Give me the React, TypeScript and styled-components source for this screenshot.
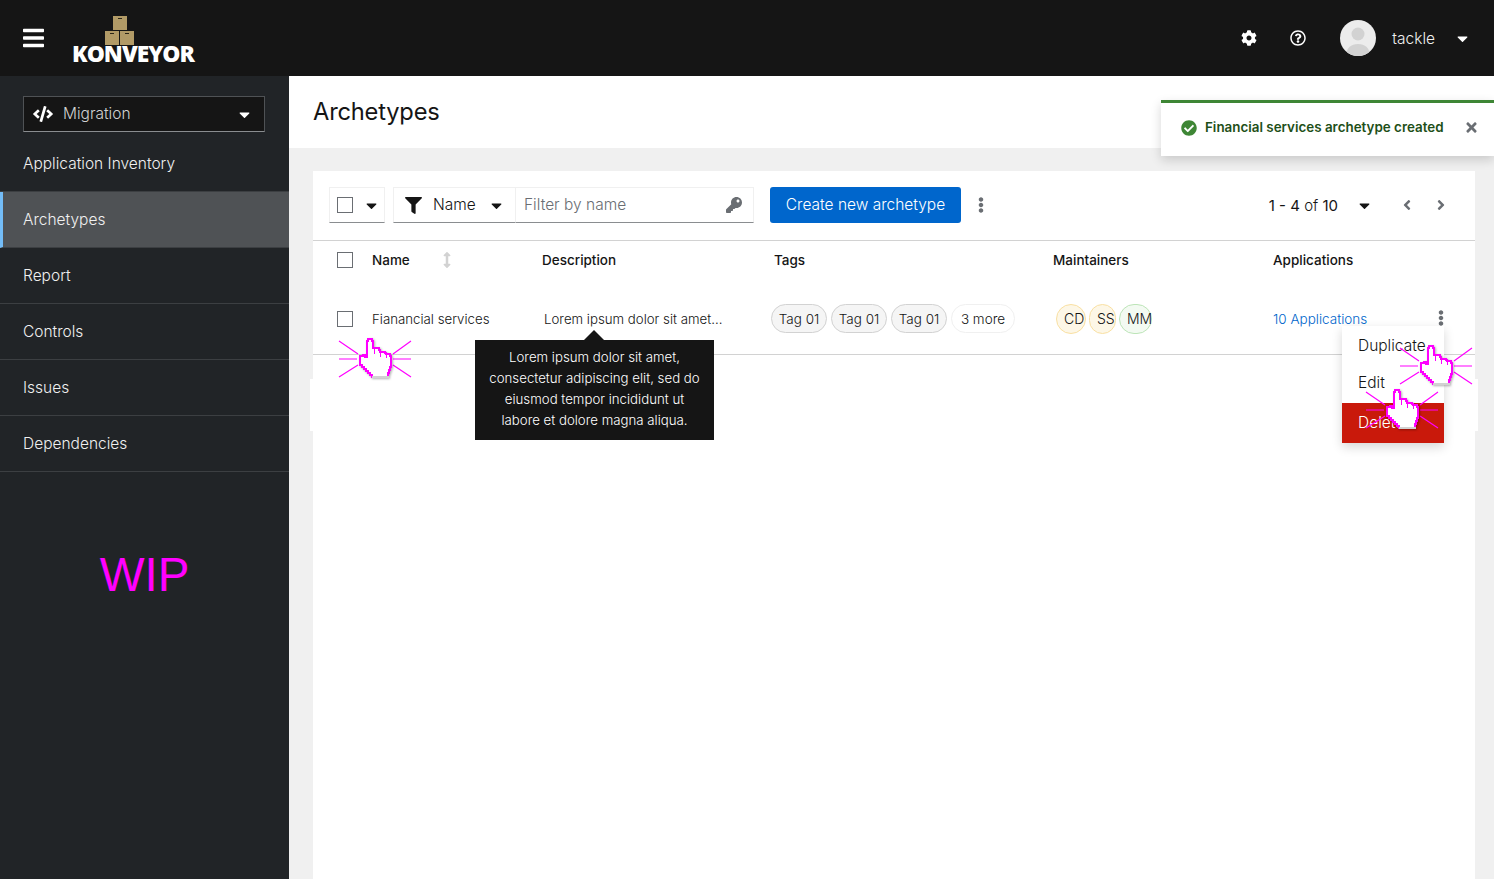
import React from 'react';
import styled, { createGlobalStyle } from 'styled-components';
import {
  FaAngleLeft,
  FaAngleRight,
  FaArrowsAltV,
  FaBars,
  FaCaretDown,
  FaCheckCircle,
  FaCode,
  FaCog,
  FaEllipsisV,
  FaFilter,
  FaKey,
  FaRegQuestionCircle,
  FaTimes,
} from 'react-icons/fa';

const FONT = `Inter, "Noto Sans", "Liberation Sans", sans-serif`;
const MAGENTA = '#ff00ff';

const GlobalStyle = createGlobalStyle`
  * { box-sizing: border-box; }
  html, body { margin: 0; padding: 0; height: 100%; overflow: hidden; }
  body { font-family: ${FONT}; color: #151515; background: #f0f0f0; }
`;

const Page = styled.div`
  position: relative;
  width: 100%;
  height: 879px;
  display: flex;
  flex-direction: column;
  overflow: hidden;
`;

/* masthead */
const Masthead = styled.header`
  height: 76px;
  flex: none;
  background: #151515;
  display: flex;
  align-items: center;
  padding: 0 23px 0 23px;
  color: #fff;
`;

const Burger = styled(FaBars)`
  width: 21px;
  height: 24px;
  margin-top: -1px;
`;

const Logo = styled.div`
  margin-left: 28px;
  width: 124px;
  display: flex;
  flex-direction: column;
  align-items: center;
  padding-top: 1px;
`;

const Boxes = styled.svg`
  width: 30px;
  height: 30px;
  display: block;
  align-self: flex-start;
  margin-left: 33px;
`;

const LogoText = styled.span`
  font-family: 'Open Sans', sans-serif;
  font-weight: 800;
  font-size: 22.8px;
  line-height: 15px;
  letter-spacing: -1px;
  margin-left: -2px;
`;

const MastheadTools = styled.div`
  margin-left: auto;
  display: flex;
  align-items: center;
`;

const ToolIcon = styled.span`
  width: 16px;
  height: 16px;
  display: flex;
  margin-right: 33px;
  svg { width: 16px; height: 16px; }
`;

const Avatar = styled.svg`
  width: 36px;
  height: 36px;
  margin-left: 1px;
  border-radius: 50%;
`;

const UserName = styled.span`
  font-size: 15.5px;
  font-weight: 300;
  margin-left: 16px;
  color: #f0f0f0;
`;

const Caret = styled(FaCaretDown)<{ $color?: string }>`
  width: 17px;
  height: 17px;
  color: ${({ $color }) => $color ?? '#151515'};
  flex: none;
`;

const UserCaret = styled(Caret)`
  margin-left: 19px;
`;

/* body */
const Body = styled.div`
  flex: 1;
  display: flex;
  min-height: 0;
`;

const Sidebar = styled.aside`
  width: 289px;
  flex: none;
  background: #212427;
  color: #f0f0f0;
  padding-top: 20px;
  display: flex;
  flex-direction: column;
`;

const PerspectiveSelect = styled.div`
  height: 36px;
  margin: 0 24px 4px 23px;
  background: #151515;
  border: 1px solid #4f5255;
  border-bottom-color: #8a8d90;
  display: flex;
  align-items: center;
  padding: 0 11px 2px 9px;
  font-size: 15.5px;
  font-weight: 300;
  color: #d2d2d2;
`;

const CodeIcon = styled(FaCode)`
  width: 20px;
  height: 16px;
  color: #fff;
  margin: 2px 10px 0 0;
`;

const SelectCaret = styled(Caret)`
  margin: 2px 0 0 auto;
`;

const NavItem = styled.div<{ $current?: boolean }>`
  height: 56px;
  display: flex;
  align-items: center;
  padding-left: ${({ $current }) => ($current ? '20px' : '23px')};
  font-size: 15.5px;
  font-weight: 300;
  border-bottom: 1px solid #3c3f42;
  background: ${({ $current }) => ($current ? '#4f5255' : 'transparent')};
  border-left: ${({ $current }) => ($current ? '3px solid #73bcf7' : 'none')};
`;

const Wip = styled.div`
  margin-top: 73px;
  text-align: center;
  font-family: 'Liberation Sans', Arial, sans-serif;
  font-size: 47.5px;
  line-height: 60px;
  color: ${MAGENTA};
`;

const Main = styled.main`
  flex: 1;
  min-width: 0;
  display: flex;
  flex-direction: column;
`;

const TitleBar = styled.div`
  height: 72px;
  flex: none;
  background: #fff;
  display: flex;
  align-items: center;
  padding: 0 0 2px 24px;
`;

const Title = styled.h1`
  margin: 0;
  font-size: 23.7px;
  font-weight: 400;
  letter-spacing: -0.2px;
`;

const Content = styled.div`
  flex: 1;
  padding: 23px 19px 0 24px;
  min-height: 0;
`;

const Card = styled.section`
  height: 100%;
  background: #fff;
`;

const Toolbar = styled.div`
  height: 70px;
  padding: 16px 16px 0;
  border-bottom: 1px solid #d2d2d2;
  display: flex;
  align-items: flex-start;
`;

const Control = styled.div<{ $width: number; $gap?: number }>`
  width: ${({ $width }) => $width}px;
  height: 36px;
  flex: none;
  margin-right: ${({ $gap }) => $gap ?? 0}px;
  display: flex;
  align-items: center;
  border: 1px solid #f0f0f0;
  border-bottom-color: #8a8d90;
  background: #fff;
`;

const CheckBox = styled.span`
  width: 16px;
  height: 16px;
  flex: none;
  display: block;
  border: 1px solid #6a6e73;
  background: #fff;
`;

const BulkControl = styled(Control)`
  padding-left: 7px;
  justify-content: space-between;
  padding-right: 4px;
`;

const FilterSelect = styled(Control)`
  padding: 0 10px 2px 11px;
  font-size: 15.5px;
  font-weight: 300;
  svg:first-child { width: 17px; height: 17px; margin: 2px 11px 0 0; color: #151515; }
`;

const FilterCaret = styled(Caret)`
  margin: 2px 0 0 auto;
`;

const FilterInput = styled(Control)`
  padding: 0 11px 2px 8px;
  font-size: 15.5px;
  font-weight: 300;
  color: #6a6e73;
  border-left: none;
  svg { margin: 2px 0 0 auto; width: 16px; height: 16px; color: #6a6e73; }
`;

const PrimaryButton = styled.button`
  width: 191px;
  height: 36px;
  margin-left: 16px;
  padding: 0 0 2px;
  flex: none;
  border: none;
  border-radius: 3px;
  background: #0066cc;
  color: #fff;
  font-family: ${FONT};
  font-size: 15.5px;
  font-weight: 300;
`;

const Kebab = styled(FaEllipsisV)`
  width: 16px;
  height: 16px;
  color: #6a6e73;
  flex: none;
`;

const ToolbarKebab = styled(Kebab)`
  margin: 10px 0 0 12px;
`;

const Pagination = styled.div`
  margin: 0 11px 0 auto;
  height: 36px;
  display: flex;
  align-items: center;
  font-size: 15px;
  font-weight: 300;
  b { font-weight: 400; }
`;

const PageCaret = styled(Caret)`
  margin: 0 28px 0 18px;
`;

const PageArrow = styled.span<{ $gap?: number }>`
  width: 12px;
  height: 16px;
  display: flex;
  margin-left: ${({ $gap }) => $gap ?? 0}px;
  color: #6a6e73;
  margin-right: 1px;
  svg { width: 12px; height: 16px; }
`;

const TableGrid = styled.div<{ $height: number; $line?: boolean; $top?: number }>`
  height: ${({ $height }) => $height}px;
  padding: ${({ $top }) => $top ?? 0}px 0 0 24px;
  display: grid;
  grid-template-columns: 35px 170px 232px 279px 220px 160px 1fr;
  align-items: center;
  border-bottom: ${({ $line }) => ($line ? '1px solid #d2d2d2' : 'none')};
`;

const HeadCell = styled.div`
  font-size: 13.5px;
  font-weight: 500;
  display: flex;
  align-items: center;
`;

const SortIcon = styled(FaArrowsAltV)`
  width: 12px;
  height: 16px;
  color: #d2d2d2;
  margin-left: 31px;
`;

const Cell = styled.div<{ $shift?: number }>`
  font-size: 13.25px;
  font-weight: 300;
  margin-left: ${({ $shift }) => $shift ?? 0}px;
  display: flex;
  align-items: center;
  white-space: nowrap;
`;

const Chip = styled.span<{ $plain?: boolean; $width: number }>`
  width: ${({ $width }) => $width}px;
  height: 29px;
  flex: none;
  display: flex;
  align-items: center;
  justify-content: center;
  font-size: 13.5px;
  font-weight: 300;
  border-radius: 15px;
  border: 1px solid ${({ $plain }) => ($plain ? '#f0f0f0' : '#d2d2d2')};
  background: ${({ $plain }) => ($plain ? '#fff' : '#f5f5f5')};
  margin-right: 4px;
`;

const MaintainerChip = styled.span<{ $green?: boolean; $width: number }>`
  width: ${({ $width }) => $width}px;
  height: 30px;
  flex: none;
  display: flex;
  align-items: center;
  padding-left: 7px;
  font-size: 14px;
  font-weight: 300;
  border-radius: 15px;
  border: 1px solid ${({ $green }) => ($green ? '#bde5b8' : '#f9e0a2')};
  background: ${({ $green }) => ($green ? '#f3faf2' : '#fdf7e7')};
  margin-right: 3px;
`;

const AppLink = styled.a`
  font-size: 13.5px;
  font-weight: 300;
  color: #0066cc;
`;

const RowKebabCell = styled.div`
  display: flex;
  margin-top: -1px;
`;

const CardPatch = styled.div<{ $left: number }>`
  position: absolute;
  left: ${({ $left }) => $left}px;
  top: 379px;
  width: 3px;
  height: 52px;
  background: #fff;
`;

/* overlays */
const Toast = styled.div`
  position: absolute;
  left: 1161px;
  top: 100px;
  width: 333px;
  height: 56px;
  background: #fff;
  border-top: 3px solid #3e8635;
  box-shadow: 0 4px 10px rgba(3, 3, 3, 0.16);
  display: flex;
  align-items: center;
  padding: 0 0 5px 20px;
  font-size: 13.4px;
  font-weight: 600;
  color: #1e4f18;
`;

const ToastCheck = styled(FaCheckCircle)`
  width: 16px;
  height: 16px;
  color: #3e8635;
  margin: 2px 8px 0 0;
`;

const ToastClose = styled(FaTimes)`
  position: absolute;
  right: 15px;
  top: 17px;
  width: 15px;
  height: 15px;
  color: #6a6e73;
`;

const Tooltip = styled.div`
  position: absolute;
  left: 475px;
  top: 340px;
  width: 239px;
  height: 100px;
  background: #151515;
  color: #fff;
  padding: 7px 12px;
  text-align: center;
  font-size: 13.25px;
  font-weight: 300;
  line-height: 21px;

  &::before {
    content: '';
    position: absolute;
    left: 109px;
    top: -10px;
    border-left: 10px solid transparent;
    border-right: 10px solid transparent;
    border-bottom: 10px solid #151515;
  }
`;

const Menu = styled.div`
  position: absolute;
  left: 1342px;
  top: 326px;
  width: 102px;
  background: #fff;
  box-shadow: 0 4px 10px rgba(3, 3, 3, 0.16);
`;

const MenuItem = styled.div<{ $danger?: boolean; $height: number }>`
  height: ${({ $height }) => $height}px;
  padding: 0 0 2px 16px;
  display: flex;
  align-items: center;
  font-size: 15.5px;
  font-weight: 300;
  background: ${({ $danger }) => ($danger ? '#c9190b' : '#fff')};
  color: ${({ $danger }) => ($danger ? '#fff' : '#151515')};

  &:first-child {
    padding-bottom: 0;
  }
`;

const HandMark = styled.svg<{ $x: number; $y: number }>`
  position: absolute;
  left: ${({ $x }) => $x}px;
  top: ${({ $y }) => $y}px;
  width: 73px;
  height: 40px;
  overflow: visible;
`;

const ClickHand = ({ x, y }: { x: number; y: number }) => (
  <HandMark $x={x} $y={y} viewBox="0 0 73 40">
    <g stroke={MAGENTA} strokeWidth="1.2" fill="none">
      <path d="M0 3L19 16M0 21H18M0 39L19 27" />
      <path d="M72 3L54 16M54 21H72M72 39L54 27" />
    </g>
    <path
      d="M28 3H29V1H33V3H34V10H40V12H41V14H46V15H47V16H51V18H52V29H51V32H50V35H49V39H33V37H31V35H29V33H27V31H25V29H23V27H21V18H24V17H26V19H28Z"
      fill="#fff"
      stroke={MAGENTA}
      strokeWidth="2"
      shapeRendering="crispEdges"
      style={{ filter: 'drop-shadow(1px 1px 1px rgba(0,0,0,0.3))' }}
    />
    <path d="M35 10v6M41 14v5M47 16v4" stroke={MAGENTA} strokeWidth="1" shapeRendering="crispEdges" />
    <path d="M33 39H50" stroke="#d2d2d2" strokeWidth="2" shapeRendering="crispEdges" />
  </HandMark>
);

const CartonBox = ({ x, y }: { x: number; y: number }) => (
  <g>
    <rect x={x} y={y} width="14" height="14" fill="#b19a66" />
    <rect x={x + 5} y={y + 2} width="4" height="1" fill="#2c2617" />
  </g>
);

const TAGS = ['Tag 01', 'Tag 01', 'Tag 01'];
const NAV = ['Application Inventory', 'Archetypes', 'Report', 'Controls', 'Issues', 'Dependencies'];

const App = () => {
  return (
    <Page>
      <GlobalStyle />
      <Masthead>
        <Burger />
        <Logo>
          <Boxes viewBox="0 0 30 30">
            <CartonBox x={8} y={0} />
            <CartonBox x={0} y={15} />
            <CartonBox x={15} y={15} />
          </Boxes>
          <LogoText>KONVEYOR</LogoText>
        </Logo>
        <MastheadTools>
          <ToolIcon>
            <FaCog />
          </ToolIcon>
          <ToolIcon>
            <FaRegQuestionCircle />
          </ToolIcon>
          <Avatar viewBox="0 0 36 36">
            <rect width="36" height="36" fill="#ececec" />
            <circle cx="18" cy="14" r="6.5" fill="#d2d2d2" />
            <path d="M6 36c0-8 5-12 12-12s12 4 12 12z" fill="#d2d2d2" />
          </Avatar>
          <UserName>tackle</UserName>
          <UserCaret $color="#fff" />
        </MastheadTools>
      </Masthead>
      <Body>
        <Sidebar>
          <PerspectiveSelect>
            <CodeIcon />
            Migration
            <SelectCaret $color="#fff" />
          </PerspectiveSelect>
          {NAV.map((item) => (
            <NavItem key={item} $current={item === 'Archetypes'}>
              {item}
            </NavItem>
          ))}
          <Wip>WIP</Wip>
        </Sidebar>
        <Main>
          <TitleBar>
            <Title>Archetypes</Title>
          </TitleBar>
          <Content>
            <Card>
              <Toolbar>
                <BulkControl $width={56} $gap={8}>
                  <CheckBox />
                  <Caret />
                </BulkControl>
                <FilterSelect $width={123}>
                  <FaFilter />
                  Name
                  <FilterCaret />
                </FilterSelect>
                <FilterInput $width={238}>
                  Filter by name
                  <FaKey />
                </FilterInput>
                <PrimaryButton>Create new archetype</PrimaryButton>
                <ToolbarKebab />
                <Pagination>
                  <span>
                    <b>1 - 4</b> of <b>10</b>
                  </span>
                  <PageCaret />
                  <PageArrow>
                    <FaAngleLeft />
                  </PageArrow>
                  <PageArrow $gap={21}>
                    <FaAngleRight />
                  </PageArrow>
                </Pagination>
              </Toolbar>
              <TableGrid $height={38}>
                <CheckBox />
                <HeadCell>
                  Name
                  <SortIcon />
                </HeadCell>
                <HeadCell>Description</HeadCell>
                <HeadCell>Tags</HeadCell>
                <HeadCell>Maintainers</HeadCell>
                <HeadCell>Applications</HeadCell>
              </TableGrid>
              <TableGrid $height={76} $top={4} $line>
                <CheckBox />
                <Cell>Fianancial services</Cell>
                <Cell $shift={2}>Lorem ipsum dolor sit amet...</Cell>
                <Cell $shift={-3}>
                  {TAGS.map((tag, i) => (
                    <Chip key={i} $width={56}>
                      {tag}
                    </Chip>
                  ))}
                  <Chip $plain $width={64}>
                    3 more
                  </Chip>
                </Cell>
                <Cell $shift={3}>
                  <MaintainerChip $width={30}>CD</MaintainerChip>
                  <MaintainerChip $width={27}>SS</MaintainerChip>
                  <MaintainerChip $green $width={33}>
                    MM
                  </MaintainerChip>
                </Cell>
                <Cell>
                  <AppLink>10 Applications</AppLink>
                </Cell>
                <RowKebabCell>
                  <Kebab />
                </RowKebabCell>
              </TableGrid>
            </Card>
          </Content>
        </Main>
      </Body>

      <CardPatch $left={310} />
      <CardPatch $left={1475} />

      <Toast>
        <ToastCheck />
        Financial services archetype created
        <ToastClose />
      </Toast>

      <Tooltip>
        Lorem ipsum dolor sit amet, consectetur adipiscing elit, sed do eiusmod tempor incididunt ut labore et dolore
        magna aliqua.
      </Tooltip>

      <Menu>
        <MenuItem $height={38}>Duplicate</MenuItem>
        <MenuItem $height={39}>Edit</MenuItem>
        <MenuItem $height={40} $danger>
          Delete
        </MenuItem>
      </Menu>

      <ClickHand x={339} y={338} />
      <ClickHand x={1400} y={345} />
      <ClickHand x={1366} y={389} />
    </Page>
  );
};

export default App;
